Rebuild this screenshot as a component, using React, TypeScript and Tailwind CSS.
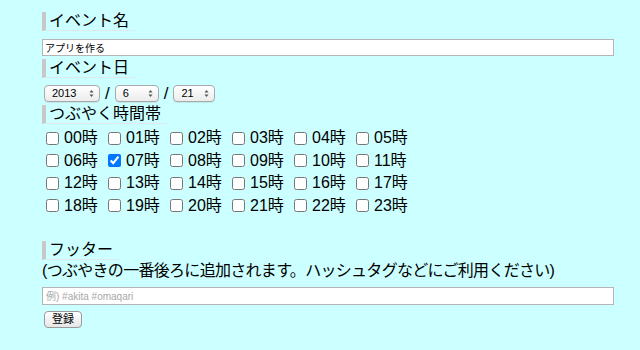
import React from 'react';

const font = { fontFamily: '"Liberation Sans", "Noto Sans CJK JP", sans-serif' };

function Heading({ children }: { children: React.ReactNode }) {
  return (
    <div className="flex">
      <h2 className="border-l-4 border-b border-l-[#c8c8c8] border-b-[#dfe9e9] pl-[3px] pr-[6px] text-[16px] leading-[18px] font-normal text-black">
        {children}
      </h2>
    </div>
  );
}

function FakeSelect({ value, width }: { value: string; width: string }) {
  return (
    <div
      className={`${width} h-[17px] flex items-center justify-between rounded-[4px] border border-[#a9a9a9] bg-gradient-to-b from-white to-[#ececec] pl-[7px] pr-[5px] text-[11px] text-black shadow-[0_1px_0_rgba(0,0,0,0.08)]`}
    >
      <span>{value}</span>
      <svg width="5" height="9" viewBox="0 0 5 9">
        <path d="M0.5 3.5 L2.5 1 L4.5 3.5 Z" fill="#555" />
        <path d="M0.5 5.5 L2.5 8 L4.5 5.5 Z" fill="#555" />
      </svg>
    </div>
  );
}

export default function App() {
  const hours = Array.from({ length: 24 }, (_, i) => String(i).padStart(2, '0'));

  return (
    <div className="min-h-[350px] w-[640px] bg-[#ccffff] pl-[42px] pt-[12px] text-black" style={font}>
      <Heading>イベント名</Heading>
      <input
        type="text"
        defaultValue="アプリを作る"
        className="mt-[8px] block h-[17px] w-[572px] border border-[#b5b5b5] bg-white px-[2px] text-[10px] leading-[15px] text-black outline-none"
      />

      <div className="mt-[3px]">
        <Heading>イベント日</Heading>
      </div>
      <div className="mt-[7px] flex h-[17px] items-center pl-[2px] leading-[17px]">
        <FakeSelect value="2013" width="w-[56px]" />
        <span className="px-[5px] text-[17px] leading-[17px]">/</span>
        <FakeSelect value="6" width="w-[44px]" />
        <span className="px-[5px] text-[17px] leading-[17px]">/</span>
        <FakeSelect value="21" width="w-[42px]" />
      </div>

      <div className="mt-[3px]">
        <Heading>つぶやく時間帯</Heading>
      </div>
      <div className="mt-[3px] grid grid-cols-[repeat(6,62px)] pl-[4px]">
        {hours.map((h) => (
          <label key={h} className="flex h-[22.5px] items-center text-[16px]">
            <input
              type="checkbox"
              defaultChecked={h === '07'}
              className="m-0 h-[13px] w-[13px]"
            />
            <span className="ml-[5px]">{h}時</span>
          </label>
        ))}
      </div>

      <div className="mt-[24px]">
        <Heading>フッター</Heading>
      </div>
      <p className="mt-[1px] text-[16px] leading-[20px] tracking-[-0.7px]">
        (つぶやきの一番後ろに追加されます。ハッシュタグなどにご利用ください)
      </p>
      <input
        type="text"
        placeholder="例) #akita #omaqari"
        className="mt-[6px] block h-[18px] w-[572px] border border-[#b5b5b5] bg-white px-[3px] text-[10px] text-black outline-none placeholder:text-[#a8a8a8]"
      />
      <button className="ml-[2px] mt-[6px] h-[17px] rounded-[4px] border border-[#9a9a9a] bg-gradient-to-b from-white to-[#e6e6e6] px-[7px] text-[11px] leading-[15px] text-black">
        登録
      </button>
    </div>
  );
}
